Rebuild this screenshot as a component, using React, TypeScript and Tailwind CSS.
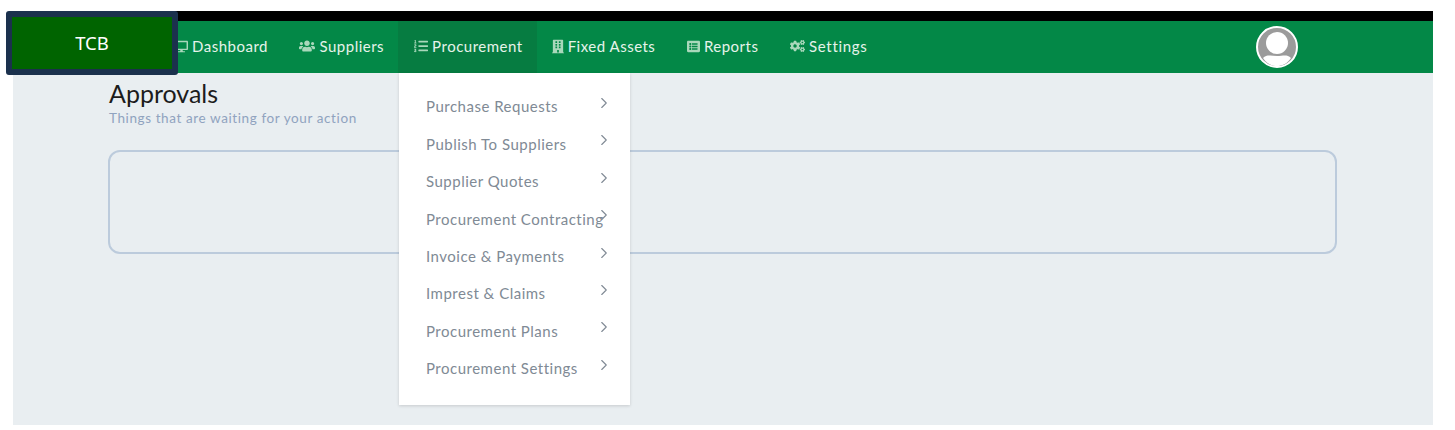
import React from 'react';
import { ChevronRight } from 'lucide-react';
import { FaDesktop, FaUsers, FaListOl, FaBuilding, FaListAlt, FaCogs } from 'react-icons/fa';

const navItems = [
  { label: 'Dashboard', icon: FaDesktop, cls: 'pl-[162px] pr-[15.5px]', iconCls: 'w-[13px] h-[13px]' },
  { label: 'Suppliers', icon: FaUsers, cls: 'pl-[16px] pr-[14px]', iconCls: 'w-[16px] h-[14px]' },
  { label: 'Procurement', icon: FaListOl, cls: 'pl-[16px] pr-[14.5px] bg-[#067c41]', iconCls: 'w-[14px] h-[14px]' },
  { label: 'Fixed Assets', icon: FaBuilding, cls: 'pl-[14.5px] pr-[15.5px]', iconCls: 'w-[12px] h-[15px]' },
  { label: 'Reports', icon: FaListAlt, cls: 'pl-[16px] pr-[15.5px]', iconCls: 'w-[13px] h-[13px]' },
  { label: 'Settings', icon: FaCogs, cls: 'pl-[16px] pr-[15.5px] tracking-[0.7px]', iconCls: 'w-[15px] h-[14px]' },
];

const menuItems = [
  'Purchase Requests',
  'Publish To Suppliers',
  'Supplier Quotes',
  'Procurement Contracting',
  'Invoice & Payments',
  'Imprest & Claims',
  'Procurement Plans',
  'Procurement Settings',
];

const Avatar = () => (
  <svg width="42" height="42" viewBox="0 0 42 42">
    <circle cx="21" cy="21" r="20" fill="#9b9b9b" stroke="#ffffff" strokeWidth="2" />
    <circle cx="21" cy="17" r="11" fill="#ffffff" />
    <path d="M7 32 C11 28 15 30 21 30 C27 30 31 28 35 32 C31 38 26 40 21 40 C16 40 11 38 7 32 Z" fill="#ffffff" />
  </svg>
);

export default function App() {
  return (
    <div className="relative w-[1455px] h-[430px] bg-white pt-[11px] pl-[13px] pr-[22px] pb-[5px] overflow-hidden font-['Lato',sans-serif]">
      <div className="relative flex flex-col h-full bg-[#e9eef1]">
        <div className="h-[10px] bg-black" />
        <nav className="flex items-stretch h-[52px] bg-[#038847] text-[#e6f3ea]">
          {navItems.map((item) => (
            <div key={item.label} className={`flex items-center gap-[4px] pb-[2px] text-[15px] tracking-[0.5px] ${item.cls}`}>
              <item.icon className={`text-[#a9d8bb] ${item.iconCls}`} />
              <span>{item.label}</span>
            </div>
          ))}
          <div className="ml-[373px] flex items-center">
            <Avatar />
          </div>
        </nav>
        <main className="flex-1 pl-[95px] pr-[96px] pt-[5px]">
          <h1 className="pl-px text-[25px] leading-[30px] text-[#1c1c1c]">Approvals</h1>
          <p className="mt-px pl-px text-[13.5px] leading-[18px] tracking-[0.6px] text-[#90a3bf]">Things that are waiting for your action</p>
          <div className="mt-[23px] h-[104px] rounded-[12px] border-2 border-[#bccbdc]" />
        </main>

        {/* Procurement dropdown */}
        <div className="absolute left-[386px] top-[62px] w-[231px] h-[332px] bg-white shadow-[0_1px_3px_rgba(0,0,0,0.15)] pt-[15px]">
          {menuItems.map((label) => (
            <div key={label} className="relative h-[37.4px] pl-[27px] flex items-center text-[15px] tracking-[0.5px] text-[#808a95] whitespace-nowrap">
              {label}
              <ChevronRight className="absolute left-[196px] top-[6px] w-[18px] h-[18px] text-[#808a95]" strokeWidth={1.5} />
            </div>
          ))}
        </div>
      </div>

      {/* Logo sits over the nav */}
      <div className="absolute left-[6px] top-[11px] w-[172px] h-[64px] flex items-center justify-center rounded-[3px] border-[6px] border-[#1b314d] bg-[#006400] text-white text-[18.5px] font-['Noto_Sans',sans-serif]">
        TCB
      </div>
    </div>
  );
}
